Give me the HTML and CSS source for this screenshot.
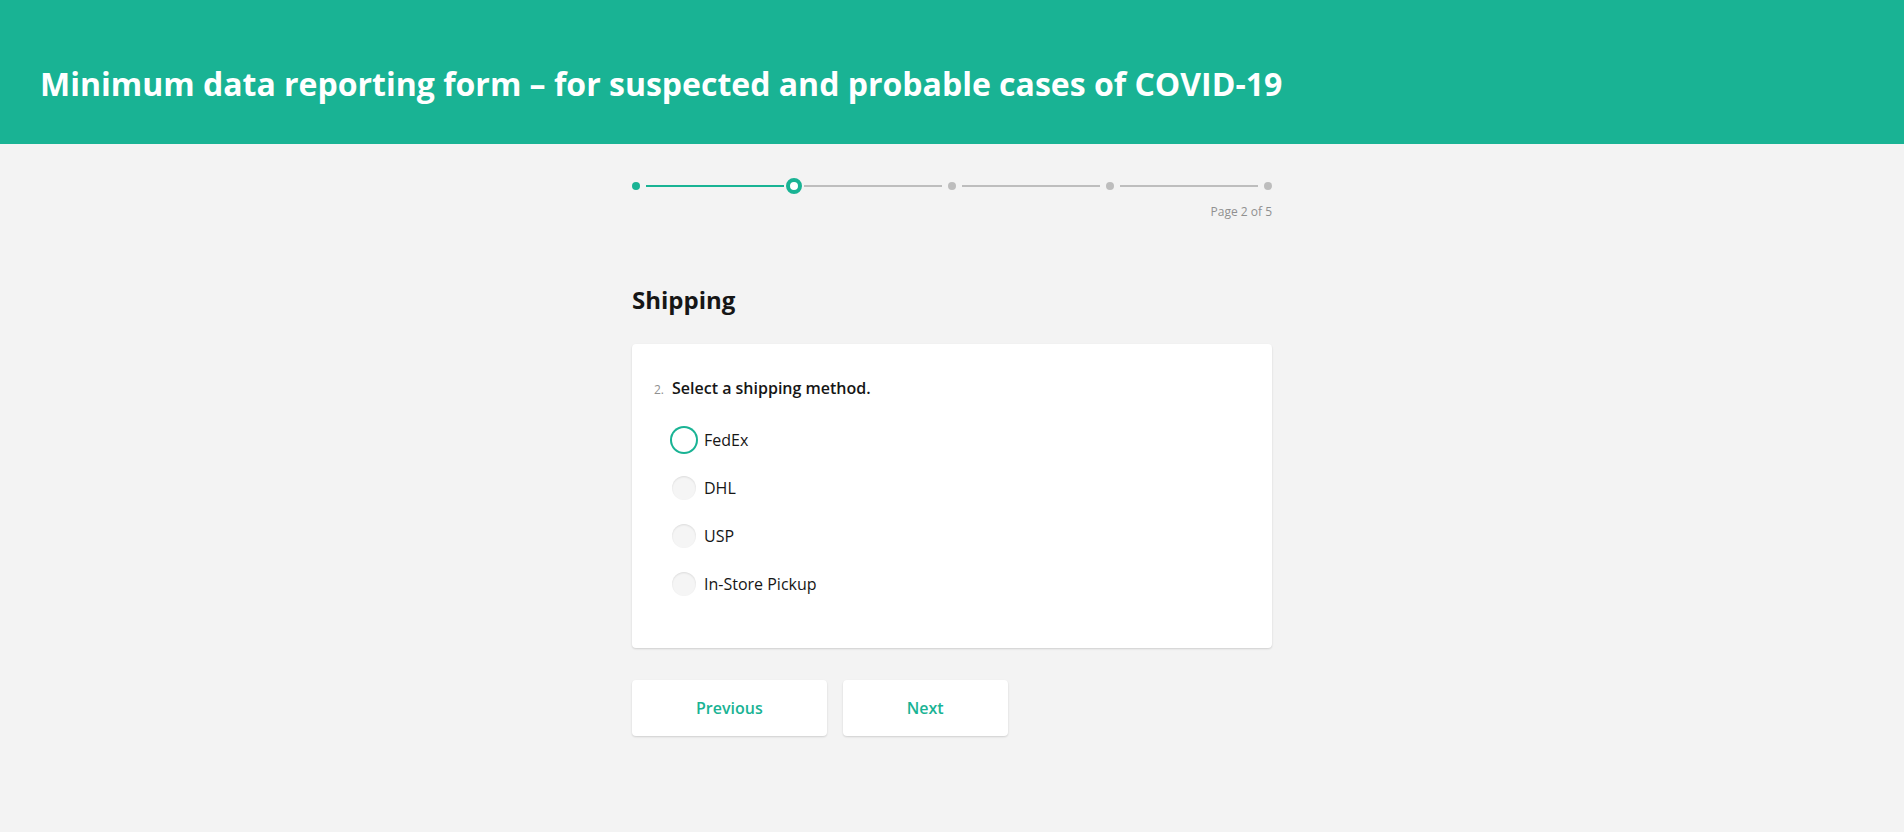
FILE: index.html
```html
<!DOCTYPE html>
<html lang="en">
<head>
<meta charset="utf-8">
<title>Minimum data reporting form</title>
<link rel="stylesheet" href="styles.css">
</head>
<body>
<header class="header">
  <h1 class="header-title">Minimum data reporting form – for suspected and probable cases of COVID-19</h1>
</header>
<main class="body">
  <div class="progress">
    <div class="steps">
      <span class="dot dot-done"></span>
      <span class="line line-done"></span>
      <span class="dot dot-current"></span>
      <span class="line"></span>
      <span class="dot"></span>
      <span class="line"></span>
      <span class="dot"></span>
      <span class="line"></span>
      <span class="dot"></span>
    </div>
    <div class="progress-text">Page 2 of 5</div>
  </div>
  <h2 class="page-title">Shipping</h2>
  <section class="card">
    <div class="q-title"><span class="q-num">2.</span><span class="q-text">Select a shipping method.</span></div>
    <div class="choices">
      <label class="choice"><span class="radio radio-focus"></span><span class="choice-text">FedEx</span></label>
      <label class="choice"><span class="radio"></span><span class="choice-text">DHL</span></label>
      <label class="choice"><span class="radio"></span><span class="choice-text">USP</span></label>
      <label class="choice"><span class="radio"></span><span class="choice-text">In-Store Pickup</span></label>
    </div>
  </section>
  <div class="nav">
    <button class="btn">Previous</button>
    <button class="btn">Next</button>
  </div>
</main>
</body>
</html>
```
FILE: styles.css
```css
* { box-sizing: border-box; }
html, body { margin: 0; padding: 0; }
body {
  background: #f3f3f3;
  font-family: "Open Sans", "Noto Sans", "Liberation Sans", sans-serif;
  color: #161616;
  height: 832px;
  overflow: hidden;
}
.header {
  background: #19b394;
  height: 144px;
  padding: 64px 40px 0 40px;
}
.header-title {
  margin: 0;
  color: #fff;
  font-size: 32px;
  line-height: 40px;
  font-weight: 700;
  white-space: nowrap;
}
.body {
  width: 640px;
  margin: 0 auto;
  padding-top: 34px;
}
.steps {
  display: grid;
  grid-template-columns: 8px 1fr 8px 1fr 8px 1fr 8px 1fr 8px;
  align-items: center;
  height: 16px;
}
.dot {
  width: 8px;
  height: 8px;
  border-radius: 50%;
  background: #bdbdbd;
}
.dot-done { background: #19b394; }
.dot-current {
  width: 16px;
  height: 16px;
  margin: 0 -4px;
  background: #fff;
  border: 4px solid #19b394;
}
.line {
  height: 2px;
  margin: 0 6px;
  background: #bdbdbd;
}
.line-done { background: #19b394; }
.progress-text {
  text-align: right;
  font-size: 12px;
  line-height: 16px;
  color: #909090;
  margin-top: 10px;
}
.page-title {
  margin: 64px 0 0;
  font-size: 24px;
  line-height: 32px;
  font-weight: 700;
  color: #161616;
}
.card {
  margin-top: 28px;
  background: #fff;
  border-radius: 4px;
  box-shadow: 0 1px 2px rgba(0,0,0,0.15);
  padding: 32px 40px 40px 22px;
  height: 304px;
}
.q-title {
  display: flex;
  align-items: baseline;
  line-height: 24px;
}
.q-num {
  font-size: 12px;
  color: #909090;
  width: 18px;
  flex: none;
}
.q-text {
  font-size: 16px;
  font-weight: 600;
  color: #161616;
}
.choices {
  margin-top: 14px;
  padding-left: 18px;
  display: flex;
  flex-direction: column;
}
.choice {
  display: flex;
  align-items: center;
  height: 48px;
}
.radio {
  width: 24px;
  height: 24px;
  border-radius: 50%;
  background: #f5f5f5;
  box-shadow: inset 0 1px 2px rgba(0,0,0,0.10);
  flex: none;
}
.radio-focus {
  background: #fff;
  box-shadow: 0 0 0 2px #19b394;
}
.choice-text {
  margin-left: 8px;
  font-size: 16px;
  line-height: 24px;
  color: #161616;
}
.nav {
  margin-top: 32px;
  display: flex;
  gap: 16px;
}
.btn {
  height: 56px;
  padding: 0 64px;
  border: none;
  background: #fff;
  border-radius: 4px;
  box-shadow: 0 1px 2px rgba(0,0,0,0.15);
  font-family: inherit;
  font-size: 16px;
  font-weight: 600;
  color: #19b394;
}
```
